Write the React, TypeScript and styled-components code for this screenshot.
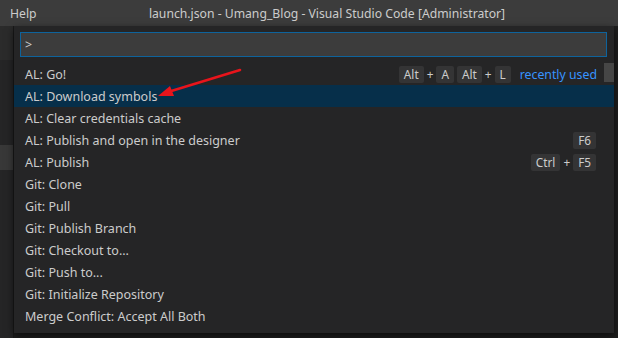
import React from 'react';
import styled, {createGlobalStyle} from 'styled-components';

const Global = createGlobalStyle`
  html, body { margin: 0; padding: 0; background: #1e1e1e; }
  body { width: 618px; height: 338px; overflow: hidden; font-family: "Noto Sans", "Open Sans", sans-serif; }
`;

const Window = styled.div`
  width: 618px;
  height: 338px;
  display: flex;
  flex-direction: column;
  background: #1e1e1e;
`;

const TitleBar = styled.div`
  height: 26px;
  flex: none;
  background: #3c3c3c;
  display: flex;
  align-items: center;
  position: relative;
  color: #cccccc;
  font-size: 12.2px;
`;

const Menu = styled.span`
  padding-left: 10px;
`;

const Title = styled.span`
  position: absolute;
  left: 0;
  right: 0;
  text-align: center;
  padding-left: 36px;
  pointer-events: none;
`;

const Body = styled.div`
  flex: 1;
  display: flex;
  min-height: 0;
`;

const SideStrip = styled.div`
  width: 13px;
  flex: none;
  display: flex;
  flex-direction: column;
  border-right: 1px solid #1a1a1a;
`;

const StripBlock = styled.div<{h: number; bg: string}>`
  height: ${p => p.h}px;
  background: ${p => p.bg};
  flex: none;
`;

const Panel = styled.div`
  width: 600px;
  height: 307px;
  flex: none;
  background: #252526;
  box-shadow: 0 3px 8px rgba(0, 0, 0, 0.6);
  position: relative;
  display: flex;
  flex-direction: column;
`;

const InputWrap = styled.div`
  padding: 6px 7px 6px 6px;
`;

const Input = styled.div`
  height: 23px;
  border: 1px solid #0e639c;
  background: #3c3c3c;
  color: #cccccc;
  font-size: 12.5px;
  display: flex;
  align-items: center;
  padding-left: 4px;
`;

const List = styled.div`
  display: flex;
  flex-direction: column;
  margin-right: 10px;
`;

const Row = styled.div<{selected?: boolean}>`
  height: 22px;
  display: flex;
  align-items: center;
  padding: 0 8px 0 11px;
  background: ${p => (p.selected ? '#062f4a' : 'transparent')};
  color: #cccccc;
  font-size: 12.5px;
  white-space: nowrap;
  margin-right: ${p => (p.selected ? '-10px' : '0')};
`;

const Label = styled.span`
  flex: 1;
`;

const Keys = styled.span`
  display: flex;
  align-items: center;
  font-size: 11.8px;
`;

const Key = styled.span`
  background: rgba(128, 128, 128, 0.17);
  border-radius: 2px;
  padding: 0 5px;
  height: 17px;
  line-height: 17px;
  color: #cccccc;
`;

const Plus = styled.span`
  padding: 0 3px;
  color: #cccccc;
`;

const Chord = styled.span`
  display: flex;
  align-items: center;
  & + & { margin-left: 3px; }
`;

const Hint = styled.span`
  color: #3794ff;
  font-size: 12.3px;
  margin-left: 9px;
  margin-right: -1px;
`;

const Scrollbar = styled.div`
  position: absolute;
  right: 0;
  top: 37px;
  width: 10px;
  height: 19px;
  background: rgba(121, 121, 121, 0.4);
`;

const Arrow = styled.svg`
  position: absolute;
  left: 128px;
  top: 38px;
  overflow: visible;
`;

type Cmd = {label: string; keys?: string[][]; hint?: string; selected?: boolean};

const commands: Cmd[] = [
  {label: 'AL: Go!', keys: [['Alt', 'A'], ['Alt', 'L']], hint: 'recently used'},
  {label: 'AL: Download symbols', selected: true},
  {label: 'AL: Clear credentials cache'},
  {label: 'AL: Publish and open in the designer', keys: [['F6']]},
  {label: 'AL: Publish', keys: [['Ctrl', 'F5']]},
  {label: 'Git: Clone'},
  {label: 'Git: Pull'},
  {label: 'Git: Publish Branch'},
  {label: 'Git: Checkout to...'},
  {label: 'Git: Push to...'},
  {label: 'Git: Initialize Repository'},
  {label: 'Merge Conflict: Accept All Both'},
];

export default function App() {
  return (
    <>
      <Global />
      <Window>
        <TitleBar>
          <Menu>Help</Menu>
          <Title>launch.json - Umang_Blog - Visual Studio Code [Administrator]</Title>
        </TitleBar>
        <Body>
          <SideStrip>
            <StripBlock h={34} bg="#2b2b2b" />
            <StripBlock h={85} bg="#252526" />
            <StripBlock h={25} bg="#383838" />
            <StripBlock h={168} bg="#252526" />
          </SideStrip>
          <Panel>
            <InputWrap>
              <Input>&gt;</Input>
            </InputWrap>
            <List>
              {commands.map(c => (
                <Row key={c.label} selected={c.selected}>
                  <Label>{c.label}</Label>
                  {c.keys && (
                    <Keys>
                      {c.keys.map((chord, i) => (
                        <Chord key={i}>
                          {chord.map((k, j) => (
                            <React.Fragment key={k}>
                              {j > 0 && <Plus>+</Plus>}
                              <Key>{k}</Key>
                            </React.Fragment>
                          ))}
                        </Chord>
                      ))}
                    </Keys>
                  )}
                  {c.hint && <Hint>{c.hint}</Hint>}
                </Row>
              ))}
            </List>
            <Scrollbar />
            <Arrow width="110" height="40" viewBox="0 0 110 40">
              <line x1="98" y1="6" x2="26" y2="28" stroke="#e8141b" strokeWidth="2.6" strokeLinecap="round" />
              <polygon points="16,32 28,22 32,32" fill="#e8141b" />
            </Arrow>
          </Panel>
        </Body>
      </Window>
    </>
  );
}
